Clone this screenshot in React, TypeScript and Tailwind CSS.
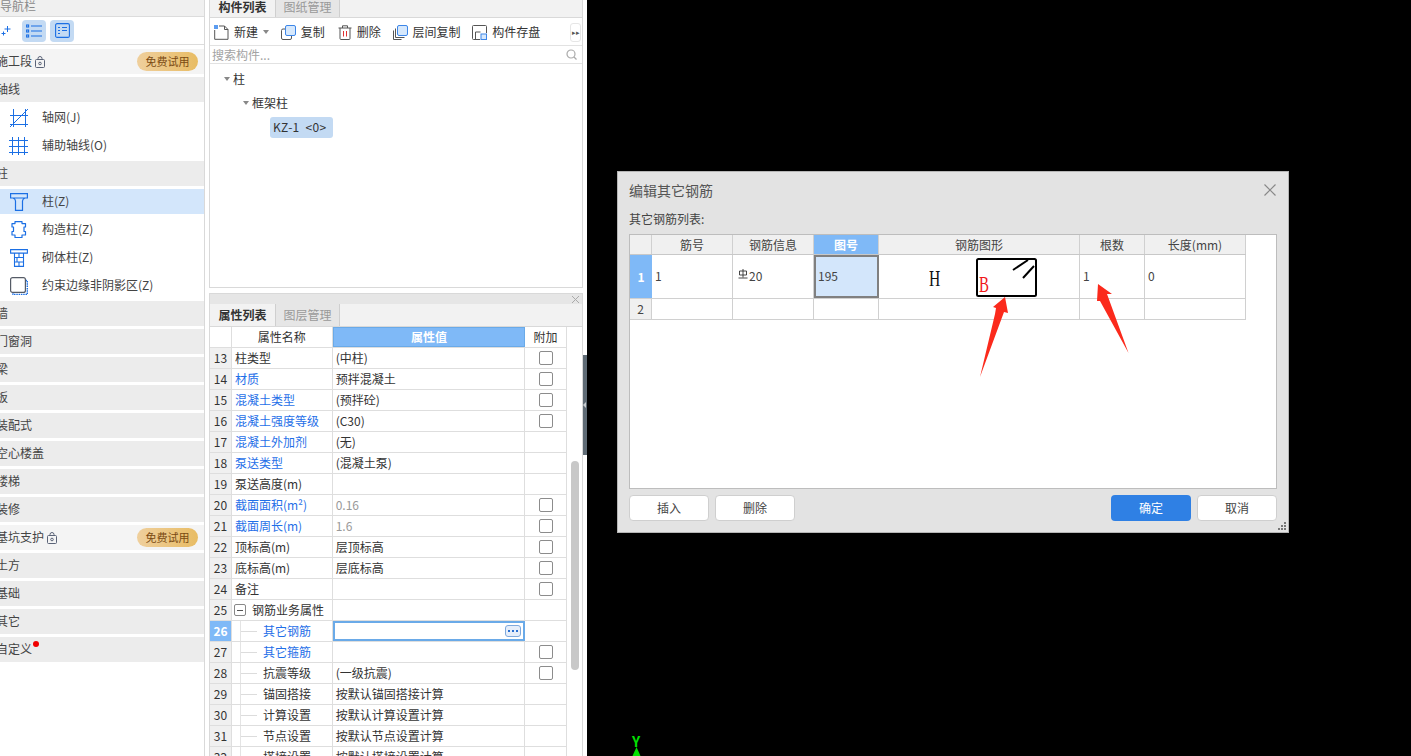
import React from "react";

const BLUE = "#1b6fe4";

const Lock = () => (
  <svg width="10" height="12" viewBox="0 0 10 12" fill="none" stroke="#5b6478" strokeWidth="1">
    <rect x=".5" y="3.500" width="9" height="8" rx="1" />
    <path d="M3 3.500V2.500a2 2 0 0 1 4 0v1" />
    <circle cx="5" cy="7.500" r="1.300" />
  </svg>
);

const Trial = () => (
  <span className="ml-auto mr-[6px] flex h-[19px] w-[61px] items-center justify-center rounded-full bg-gradient-to-r from-[#efcf9c] to-[#e8bc63] text-[11px] text-[#7a4a12]">
    免费试用
  </span>
);

const GridIcon = () => (
  <svg width="18" height="18" viewBox="0 0 18 18" fill="none" stroke={BLUE} strokeWidth="1">
    <path d="M3.500 0v18M15.500 0v18M0 6.500h18M0 15.500h18" />
    <path d="M0 18L18 0" />
  </svg>
);
const Grid2Icon = () => (
  <svg width="20" height="18" viewBox="0 0 20 18" fill="none" stroke={BLUE} strokeWidth="1">
    <path d="M3.500 0v18M9.500 0v18M15.500 0v18M0 3.500h19M0 9.500h19M0 15.500h19" />
  </svg>
);
const ColumnIcon = () => (
  <svg width="18" height="18" viewBox="0 0 18 18" fill="none" stroke={BLUE} strokeWidth="1.200">
    <path d="M.6.6h16.800v4.400H.6zM3 5c2 .8 2.500 1.500 2.500 3v9.400h7V8c0-1.500.5-2.200 2.500-3" />
  </svg>
);
const BlobIcon = () => (
  <svg width="16" height="17" viewBox="0 0 16 17" fill="none" stroke={BLUE} strokeWidth="1.200">
    <path d="M4 .6h7v2h3.500v3.400h-1.500v4.500h1.500v3.500H11v2.500H4v-2.500H1v-3.500h1.500V6H1V2.600h3z" strokeLinejoin="round" />
  </svg>
);
const BrickIcon = () => (
  <svg width="18" height="18" viewBox="0 0 18 18" fill="none" stroke={BLUE} strokeWidth="1.100">
    <path d="M.6.6h16.800v3.500H.6zM4.500 4.100h9v13.300h-9zM4.500 8.500h9M4.500 13h9M9 4.100v4.400M9 13v4.400M7 8.500V13" />
  </svg>
);
const EdgeIcon = () => (
  <svg width="18" height="18" viewBox="0 0 18 18" fill="none">
    <path d="M15.500 3.500h1.800v14H3v-2" stroke={BLUE} strokeWidth="1.400" strokeDasharray="1.500 .8" />
    <rect x=".6" y=".6" width="14.800" height="14.800" rx="2" stroke="#555b66" strokeWidth="1.200" />
  </svg>
);

const NavGroup = ({ label, children, light }: { label: string; children?: React.ReactNode; light?: boolean }) => (
  <div className="h-[28px] pb-px pt-[2px]">
    <div className={`flex h-[25px] items-center ${light ? "bg-[#f4f4f4]" : "bg-[#ececec]"}`}>
      <span className="-ml-[4px] -mt-[2px] text-[12px] text-[#444]">{label}</span>
      {children}
    </div>
  </div>
);

const NavItem = ({ label, icon, active }: { label: string; icon: React.ReactNode; active?: boolean }) => (
  <div className="h-[28px] pb-px pt-[2px]">
    <div className={`flex h-[25px] items-center ${active ? "bg-[#d3e6fb]" : ""}`}>
      <span className="flex w-[38px] justify-center">{icon}</span>
      <span className="ml-[4px] -mt-[2px] text-[12px] text-[#444]">{label}</span>
    </div>
  </div>
);

const Nav = () => (
  <div className="flex w-[205px] shrink-0 flex-col overflow-hidden border-r border-[#d9d9d9] bg-white">
    <div className="h-[17px] overflow-hidden border-b border-[#dcdcdc] bg-[#f0f0f0] text-[12px] leading-[12px] text-[#8a8a8a]">
      导航栏
    </div>
    <div className="flex h-[28px] items-center border-b border-[#dcdcdc]">
      <svg className="ml-[1px]" width="10" height="10" viewBox="0 0 10 10" fill="none" stroke={BLUE} strokeWidth="1">
        <path d="M6.500 0v6M3.500 3h6M2.500 5.500v4M.5 7.500h4" />
      </svg>
      <span className="ml-[11px] flex h-[22px] w-[24px] items-center justify-center rounded-[4px] bg-[#c3daf3]">
        <svg width="16" height="14" viewBox="0 0 16 14" fill="none" stroke={BLUE} strokeWidth="1.100">
          <rect x=".6" y="1" width="2" height="2" />
          <rect x=".6" y="6" width="2" height="2" />
          <rect x=".6" y="11" width="2" height="2" />
          <path d="M5 2h11M5 7h11M5 12h11" />
        </svg>
      </span>
      <span className="ml-[4px] flex h-[22px] w-[24px] items-center justify-center rounded-[4px] bg-[#c3daf3]">
        <svg width="15" height="15" viewBox="0 0 15 15" fill="none" stroke={BLUE} strokeWidth="1.100">
          <rect x=".6" y=".6" width="13.800" height="13.800" rx="1.500" />
          <path d="M3 4.500h2M7 4.500h5M3 7.500h2M7 7.500h5M3 10.500h2" />
        </svg>
      </span>
    </div>
    <div className="h-[2px]" />
    <NavGroup label="施工段" light>
      <span className="ml-[3px] flex"><Lock /></span>
      <Trial />
    </NavGroup>
    <NavGroup label="轴线" />
    <NavItem label="轴网(J)" icon={<GridIcon />} />
    <NavItem label="辅助轴线(O)" icon={<Grid2Icon />} />
    <NavGroup label="柱" />
    <NavItem label="柱(Z)" icon={<ColumnIcon />} active />
    <NavItem label="构造柱(Z)" icon={<BlobIcon />} />
    <NavItem label="砌体柱(Z)" icon={<BrickIcon />} />
    <NavItem label="约束边缘非阴影区(Z)" icon={<EdgeIcon />} />
    <NavGroup label="墙" />
    <NavGroup label="门窗洞" />
    <NavGroup label="梁" />
    <NavGroup label="板" />
    <NavGroup label="装配式" />
    <NavGroup label="空心楼盖" />
    <NavGroup label="楼梯" />
    <NavGroup label="装修" />
    <NavGroup label="基坑支护" light>
      <span className="ml-[3px] flex"><Lock /></span>
      <Trial />
    </NavGroup>
    <NavGroup label="土方" />
    <NavGroup label="基础" />
    <NavGroup label="其它" />
    <NavGroup label="自定义">
      <span className="-mt-[12px] ml-[1px] h-[6px] w-[6px] rounded-full bg-[#f00000]" />
    </NavGroup>
  </div>
);

const Tabs = ({ a, b, h, lift }: { a: string; b: string; h: string; lift?: boolean }) => (
  <div className={`flex ${h} border-b border-[#d9d9d9] bg-[#f2f2f2] text-[12px]`}>
    <div className={`flex w-[65px] items-center justify-center font-bold text-[#333] ${lift ? "pb-[4px]" : ""}`}>{a}</div>
    <div className={`flex w-[65px] items-center justify-center border-x border-[#cfcfcf] bg-[#e6e6e6] text-[#999] ${lift ? "pb-[4px]" : ""}`}>{b}</div>
  </div>
);

const Tool = ({ icon, label, w, children }: { icon: React.ReactNode; label: string; w: string; children?: React.ReactNode }) => (
  <div className={`flex ${w} items-center`}>
    {icon}
    <span className="ml-[5px] text-[12px] text-[#333]">{label}</span>
    {children}
  </div>
);

const Caret = () => <span className="h-0 w-0 border-x-[3.500px] border-t-[4px] border-x-transparent border-t-[#888]" />;

const Toolbar = () => (
  <div className="flex h-[28px] items-center border-b border-[#e2e2e2] pl-[4px] pt-px">
    <Tool
      w="w-[67px]"
      label="新建"
      icon={
        <svg width="15" height="15" viewBox="0 0 15 15" fill="none">
          <path d="M5 1h5.500L14 4.500v9.800H.7V5" stroke="#555" strokeWidth="1" />
          <path d="M10.500 1v3.500H14" stroke="#555" strokeWidth="1" />
          <rect x="0" y="0" width="4" height="4" fill="#5b9cf0" />
        </svg>
      }
    >
      <span className="ml-[5px] flex"><Caret /></span>
    </Tool>
    <Tool
      w="w-[57px]"
      label="复制"
      icon={
        <svg width="15" height="15" viewBox="0 0 15 15" fill="none">
          <rect x=".5" y="4" width="10" height="10.500" rx="1.500" stroke="#555" />
          <rect x="4.500" y=".5" width="10" height="10" rx="1.500" fill="#d6e8fc" stroke="#3d86e8" />
        </svg>
      }
    />
    <Tool
      w="w-[55px]"
      label="删除"
      icon={
        <svg width="14" height="15" viewBox="0 0 14 15" fill="none" stroke="#555">
          <path d="M.5 3h13M4.500 3V.8h5V3M2 3v10.500a1 1 0 0 0 1 1h8a1 1 0 0 0 1-1V3" />
          <path d="M5.500 6v5.500M8.500 6v5.500" stroke="#e03131" />
        </svg>
      }
    />
    <Tool
      w="w-[80px]"
      label="层间复制"
      icon={
        <svg width="15" height="15" viewBox="0 0 15 15" fill="none">
          <path d="M2.500 3.500v9h9M.5 5.500v9h8" stroke="#555" />
          <rect x="4.500" y=".5" width="10" height="10" rx="1.500" fill="#d6e8fc" stroke="#3d86e8" />
        </svg>
      }
    />
    <Tool
      w="w-[98px]"
      label="构件存盘"
      icon={
        <svg width="15" height="15" viewBox="0 0 15 15" fill="none" stroke="#555">
          <path d="M1.500.5h12a1 1 0 0 1 1 1V8M8 14.500H1.500a1 1 0 0 1-1-1v-12a1 1 0 0 1 1-1M3.500 14V7h5" />
          <rect x="9" y="9" width="5.500" height="5.500" fill="#d6e8fc" stroke="#3d86e8" />
        </svg>
      }
    />
    <div className="ml-auto mr-[1px] flex h-[19px] w-[11px] items-center justify-center rounded-[3px] border border-[#e6e6e6] text-[7px] text-[#555]">
      ▸▸
    </div>
  </div>
);

const TopPanel = () => (
  <div className="flex h-[288px] flex-col border border-t-0 border-[#d9d9d9]">
    <Tabs a="构件列表" b="图纸管理" h="h-[18px]" lift />
    <Toolbar />
    <div className="flex h-[18px] items-center justify-between border-b border-[#e2e2e2] px-[2px] text-[12px] text-[#a3a3a3]">
      <span>搜索构件...</span>
      <svg className="mr-[3px]" width="11" height="11" viewBox="0 0 11 11" fill="none" stroke="#aaa" strokeWidth="1.200">
        <circle cx="5" cy="5" r="4" />
        <path d="M8 8l2.500 2.500" />
      </svg>
    </div>
    <div className="flex flex-col text-[12px] text-[#333]">
      <div className="mt-[3px] flex h-[24px] items-center pl-[14px]"><Caret /><span className="ml-[3px]">柱</span></div>
      <div className="flex h-[24px] items-center pl-[33px]"><Caret /><span className="ml-[3px]">框架柱</span></div>
      <div className="flex h-[24px] items-center pl-[60px]">
        <span className="flex h-[21px] w-[63px] items-center whitespace-pre rounded-[3px] bg-[#c3daf3] pl-[3px] text-[12px] tracking-[0.3px] text-[#333]">KZ-1  &lt;0&gt;</span>
      </div>
    </div>
  </div>
);

type Row = { n: number; name: string; val?: string; blue?: boolean; gray?: boolean; check?: boolean; tree?: boolean; minus?: boolean; sel?: boolean };
const rows: Row[] = [
  { n: 13, name: "柱类型", val: "(中柱)", check: true },
  { n: 14, name: "材质", val: "预拌混凝土", blue: true, check: true },
  { n: 15, name: "混凝土类型", val: "(预拌砼)", blue: true, check: true },
  { n: 16, name: "混凝土强度等级", val: "(C30)", blue: true, check: true },
  { n: 17, name: "混凝土外加剂", val: "(无)", blue: true },
  { n: 18, name: "泵送类型", val: "(混凝土泵)", blue: true },
  { n: 19, name: "泵送高度(m)" },
  { n: 20, name: "截面面积(m²)", val: "0.16", blue: true, gray: true, check: true },
  { n: 21, name: "截面周长(m)", val: "1.6", blue: true, gray: true, check: true },
  { n: 22, name: "顶标高(m)", val: "层顶标高", check: true },
  { n: 23, name: "底标高(m)", val: "层底标高", check: true },
  { n: 24, name: "备注", check: true },
  { n: 25, name: "钢筋业务属性", minus: true },
  { n: 26, name: "其它钢筋", blue: true, tree: true, sel: true },
  { n: 27, name: "其它箍筋", blue: true, tree: true, check: true },
  { n: 28, name: "抗震等级", val: "(一级抗震)", tree: true, check: true },
  { n: 29, name: "锚固搭接", val: "按默认锚固搭接计算", tree: true },
  { n: 30, name: "计算设置", val: "按默认计算设置计算", tree: true },
  { n: 31, name: "节点设置", val: "按默认节点设置计算", tree: true },
  { n: 32, name: "搭接设置", val: "按默认搭接设置计算", tree: true },
];

const PropRow = ({ r }: { r: Row }) => (
  <div className="flex h-[21px] shrink-0 border-b border-[#dedede] text-[12px] text-[#333]">
    <div className={`flex w-[22px] items-center justify-center border-r border-[#dedede] ${r.sel ? "bg-[#7fb9f7] font-bold text-white" : "bg-[#f0f0f0]"}`}>
      {r.n}
    </div>
    <div className={`flex w-[101px] items-center border-r border-[#dedede] ${r.tree ? "pl-[8px]" : r.minus ? "pl-[2px]" : "pl-[3px]"}`}>
      {r.tree && (
        <>
          <span className="h-full w-px bg-[#e4e4e4]" />
          <span className="mr-[6px] h-px w-[16px] bg-[#dcdcdc]" />
        </>
      )}
      {r.minus && (
        <span className="mr-[6px] flex h-[12px] w-[12px] items-center justify-center rounded-[2px] border border-[#888]">
          <span className="h-px w-[6px] bg-[#555]" />
        </span>
      )}
      <span className={`whitespace-nowrap ${r.blue ? "text-[#1f6fe8]" : ""}`}>{r.name}</span>
    </div>
    {r.sel ? (
      <div className="flex w-[193px] items-center justify-end border-2 border-[#6aaae8] bg-white pr-[2px]">
        <span className="flex h-[12px] w-[16px] items-center justify-center gap-[2px] rounded-[3px] border border-[#7fa9dc] bg-[#e6eefa]">
          <span className="h-[2px] w-[2px] bg-[#2a6fd0]" />
          <span className="h-[2px] w-[2px] bg-[#2a6fd0]" />
          <span className="h-[2px] w-[2px] bg-[#2a6fd0]" />
        </span>
      </div>
    ) : (
      <div className={`flex w-[193px] items-center border-r border-[#dedede] pl-[3px] ${r.gray ? "text-[#999]" : ""}`}>{r.val}</div>
    )}
    <div className="flex w-[41px] items-center justify-center">
      {r.check && <span className="h-[14px] w-[14px] rounded-[2px] border border-[#8c8c8c] bg-white" />}
    </div>
  </div>
);

const BottomPanel = () => (
  <div className="mt-[5px] flex flex-1 flex-col overflow-hidden border-x border-t border-[#d9d9d9]">
    <div className="flex h-[10px] items-center justify-end bg-[#e6e6e6] pr-[3px]">
      <svg width="7" height="7" viewBox="0 0 7 7" stroke="#aaa" strokeWidth="1"><path d="M0 0l7 7M7 0L0 7" /></svg>
    </div>
    <Tabs a="属性列表" b="图层管理" h="h-[23px]" />
    <div className="flex flex-1 overflow-hidden">
      <div className="flex w-[357px] shrink-0 flex-col border-r border-[#dedede]">
        <div className="flex h-[21px] shrink-0 border-b border-[#dedede] text-[12px] text-[#333]">
          <div className="w-[22px] border-r border-[#dedede]" />
          <div className="flex w-[101px] items-center justify-center border-r border-[#dedede]">属性名称</div>
          <div className="flex w-[193px] items-center justify-center border border-[#6aaae8] bg-[#7fb9f7] font-bold text-white">属性值</div>
          <div className="flex w-[41px] items-center justify-center">附加</div>
        </div>
        {rows.map((r) => (
          <PropRow key={r.n} r={r} />
        ))}
      </div>
      <div className="flex flex-1 justify-center">
        <div className="mt-[134px] h-[209px] w-[8px] rounded-full bg-[#c8c8c8]" />
      </div>
    </div>
  </div>
);

const Th = ({ w, children, sel }: { w: string; children?: React.ReactNode; sel?: boolean }) => (
  <div className={`flex ${w} items-center justify-center border-r border-[#d0d0d0] ${sel ? "bg-[#7fb9f7] font-bold text-white" : "bg-[#f0f0f0] text-[#444]"}`}>
    {children}
  </div>
);
const Td = ({ w, children }: { w: string; children?: React.ReactNode }) => (
  <div className={`flex ${w} items-center border-r border-[#d0d0d0] pb-[2px] pl-[3px]`}>{children}</div>
);

const Dialog = () => (
  <div className="absolute left-[30px] top-[171px] flex h-[362px] w-[672px] flex-col border border-[#b5b5b5] bg-[#e3e3e3] px-[11px] text-[12px] text-[#444]">
    <div className="flex h-[36px] shrink-0 items-center justify-between">
      <span className="text-[14px] text-[#555]">编辑其它钢筋</span>
      <svg className="mr-[1px]" width="12" height="12" viewBox="0 0 12 12" stroke="#888" strokeWidth="1.200"><path d="M.5.5l11 11M11.500.5l-11 11" /></svg>
    </div>
    <div className="mt-[1px] flex h-[20px] shrink-0 items-center">其它钢筋列表:</div>
    <div className="mt-[5px] h-[255px] w-[648px] shrink-0 border border-[#bdbdbd] bg-white">
      <div className="flex h-[20px] w-[616px] border-b border-[#c8c8c8]">
        <Th w="w-[22px]" />
        <Th w="w-[81px]">筋号</Th>
        <Th w="w-[81px]">钢筋信息</Th>
        <Th w="w-[65px]" sel>图号</Th>
        <Th w="w-[201px]">钢筋图形</Th>
        <Th w="w-[65px]">根数</Th>
        <Th w="w-[101px]">长度(mm)</Th>
      </div>
      <div className="flex h-[44px] w-[616px] border-b border-[#d0d0d0]">
        <div className="flex w-[22px] items-center justify-center bg-[#7fb9f7] font-bold text-white">1</div>
        <Td w="w-[81px]">1</Td>
        <Td w="w-[81px]">
          <svg className="mb-[4px] ml-[2px] mr-px" width="10" height="10" viewBox="0 0 10 10" fill="none" stroke="#333" strokeWidth=".9">
            <path d="M1.500 2h7v4h-7zM5 0v8.500M.5 9h9" />
          </svg>
          20
        </Td>
        <div className="flex w-[65px] items-center border-2 border-[#808080] bg-[#d3e6fb] pb-[2px] pl-[2px]">195</div>
        <div className="relative flex w-[201px] items-center border-r border-[#d0d0d0]">
          <span className="ml-[50px] mt-[2px] origin-left scale-x-[0.65] font-['Liberation_Serif',serif] text-[24px] leading-none text-[#111]">H</span>
          <svg className="absolute left-[97px] top-[3px]" width="61" height="39" viewBox="0 0 61 39" fill="none" stroke="#000">
            <rect x="1" y="1" width="59" height="37" rx="1.500" strokeWidth="2" />
            <path d="M37 12L52 2M47 20L58 8" strokeWidth="2" />
          </svg>
          <span className="absolute left-[100px] top-[18px] origin-left scale-x-[0.65] font-['Liberation_Serif',serif] text-[23px] leading-none text-[#f01818]">B</span>
        </div>
        <Td w="w-[65px]">1</Td>
        <Td w="w-[101px]">0</Td>
      </div>
      <div className="flex h-[21px] w-[616px] border-b border-[#d0d0d0]">
        <div className="flex w-[22px] items-center justify-center border-r border-[#d0d0d0] bg-[#f0f0f0]">2</div>
        <Td w="w-[81px]" />
        <Td w="w-[81px]" />
        <Td w="w-[65px]" />
        <Td w="w-[201px]" />
        <Td w="w-[65px]" />
        <Td w="w-[101px]" />
      </div>
    </div>
    <div className="mt-[6px] flex h-[26px] shrink-0">
      <button className="h-full w-[80px] rounded-[4px] border border-[#cfcfcf] bg-white">插入</button>
      <button className="ml-[6px] h-full w-[80px] rounded-[4px] border border-[#cfcfcf] bg-white">删除</button>
      <button className="ml-auto h-full w-[80px] rounded-[4px] bg-[#2f80e4] text-white">确定</button>
      <button className="ml-[6px] h-full w-[80px] rounded-[4px] border border-[#cfcfcf] bg-white">取消</button>
    </div>
    <svg className="absolute bottom-[1px] right-[1px]" width="10" height="10" viewBox="0 0 10 10" fill="#777">
      <rect x="7" y="1" width="2" height="2" />
      <rect x="4" y="4" width="2" height="2" />
      <rect x="7" y="4" width="2" height="2" />
      <rect x="1" y="7" width="2" height="2" />
      <rect x="4" y="7" width="2" height="2" />
      <rect x="7" y="7" width="2" height="2" />
    </svg>
  </div>
);

const Arrows = () => (
  <svg className="absolute left-0 top-0" width="824" height="756" viewBox="587 0 824 756" fill="#fb2a1c">
    <polygon points="980,377 995,314 996,308 993,307 1005,297 1008,313 1004,312" />
    <polygon points="1128.500,353 1100,301 1097,301 1098,284 1112,294 1107,294" />
  </svg>
);

export default function App() {
  return (
    <div className="flex h-[756px] w-[1411px] overflow-hidden bg-white font-['Noto_Sans_CJK_SC',sans-serif]">
      <Nav />
      <div className="ml-[4px] flex w-[374px] shrink-0 flex-col">
        <TopPanel />
        <BottomPanel />
      </div>
      <div className="flex w-[4px] shrink-0 items-center">
        <div className="mb-[-54px] flex h-[100px] w-[4px] items-center bg-[#5f6b75]">
          <span className="h-0 w-0 border-y-[3px] border-r-[3px] border-y-transparent border-r-[#c8ccd0]" />
        </div>
      </div>
      <div className="relative flex-1 bg-black">
        <Dialog />
        <Arrows />
        <span className="absolute left-[45px] top-[734px] text-[14px] font-bold leading-none text-[#00e000]">Y</span>
        <svg className="absolute left-[45px] top-[747px]" width="9" height="9" viewBox="0 0 9 9" fill="#00e000">
          <polygon points="4.500,0 8.500,9 .5,9" />
        </svg>
      </div>
    </div>
  );
}
